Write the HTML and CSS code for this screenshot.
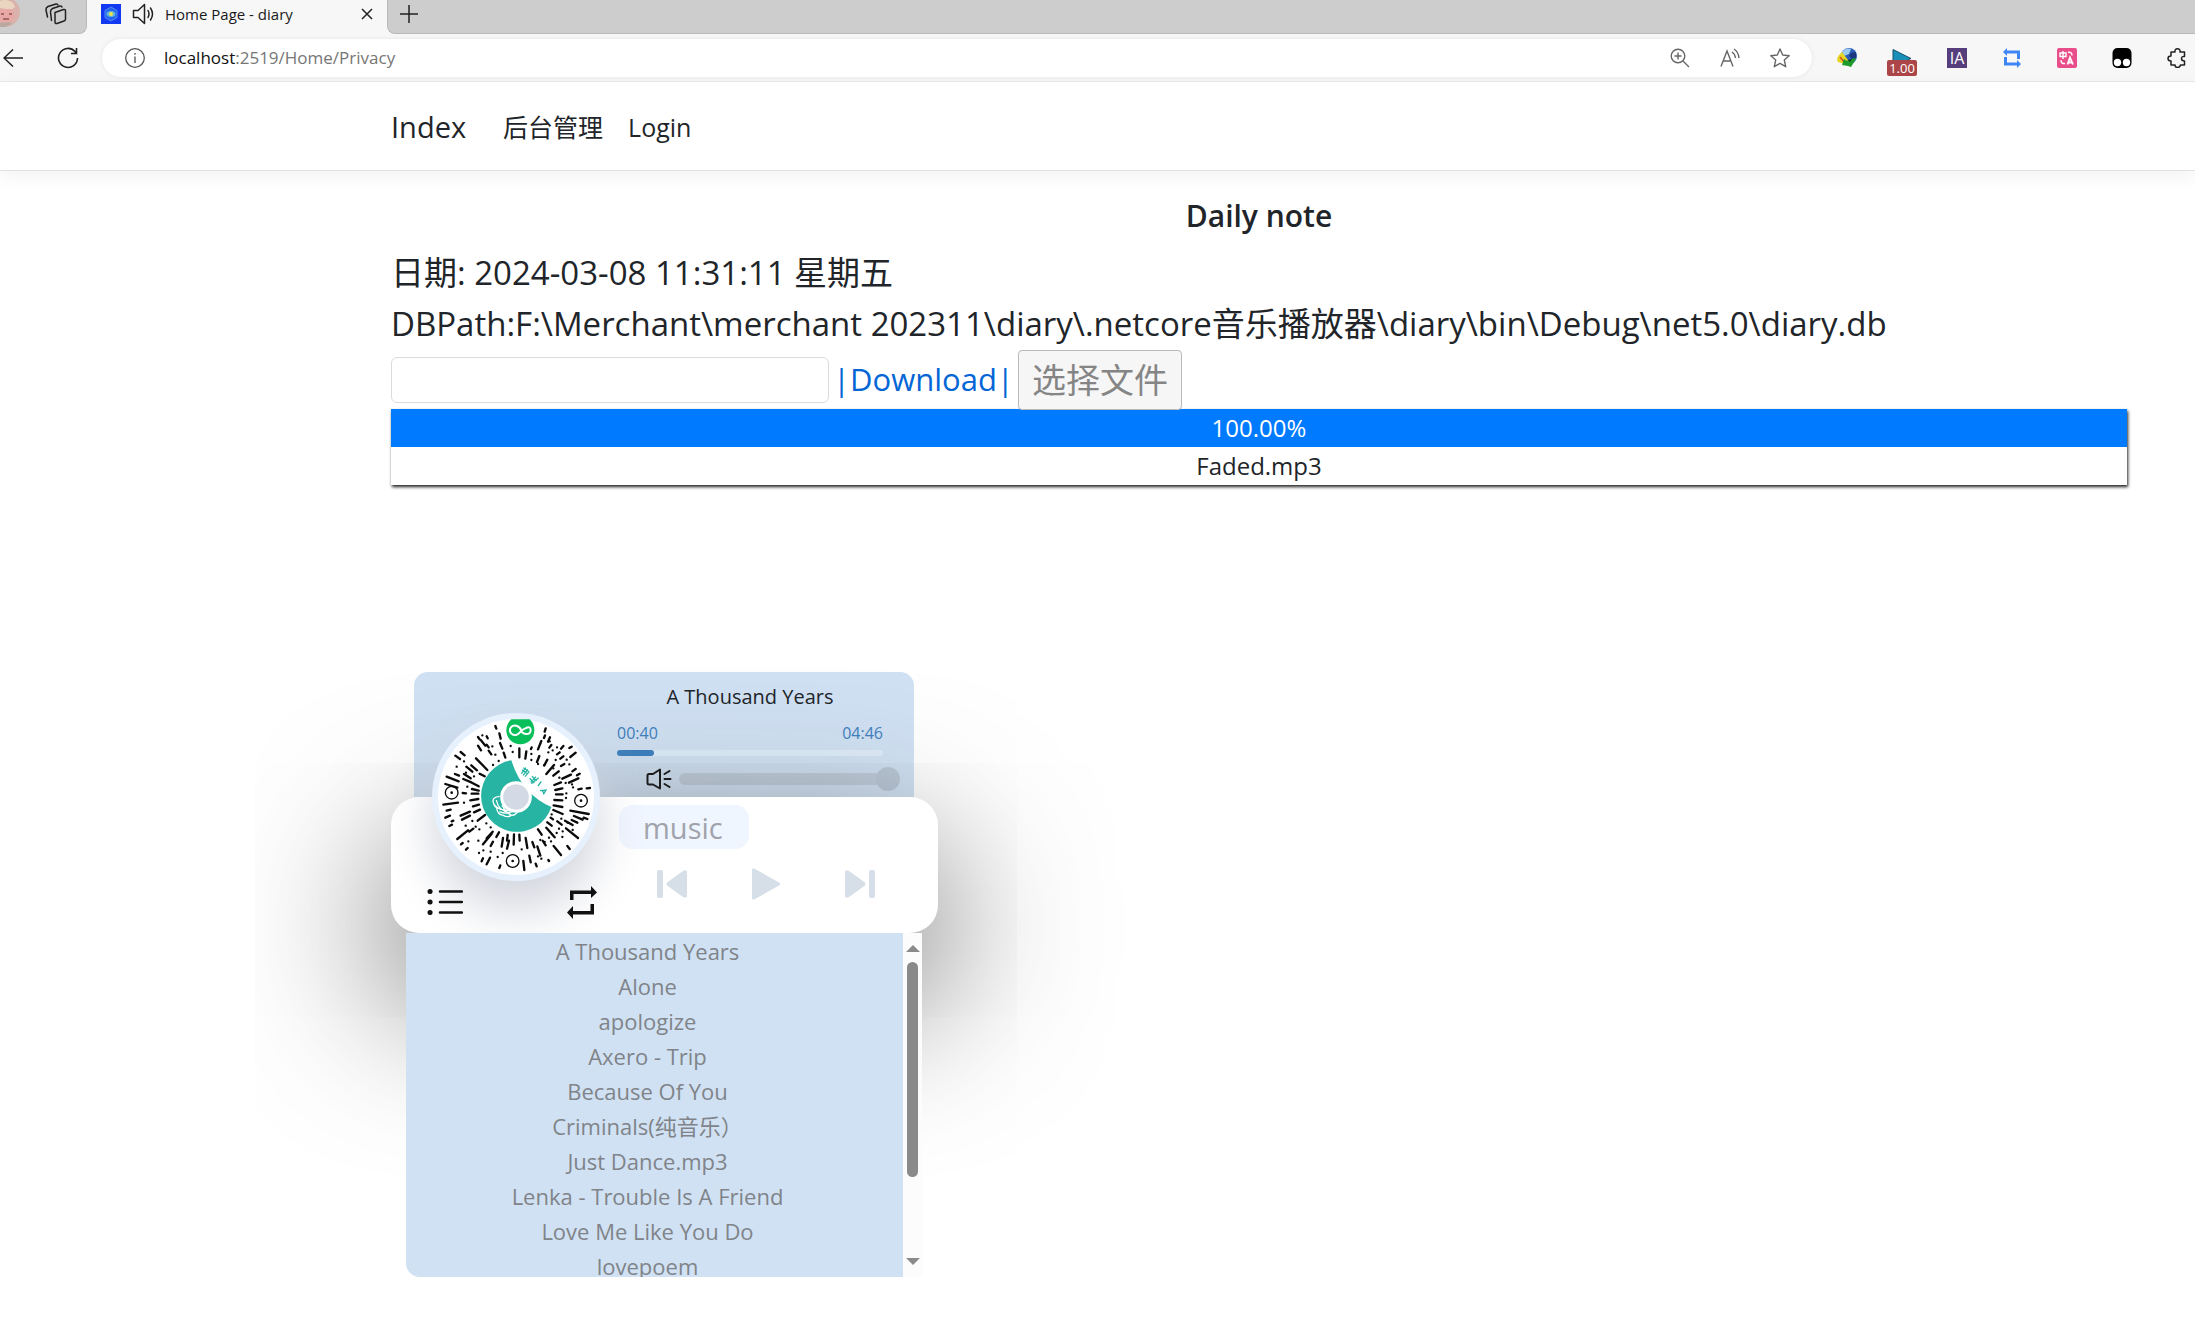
FILE: index.html
```html
<!DOCTYPE html>
<html lang="zh-CN">
<head>
<meta charset="utf-8">
<title>Home Page - diary</title>
<link rel="stylesheet" href="styles.css">
</head>
<body>
<div class="tabstrip">
  <div class="strip-left">
    <svg class="avatar" width="22" height="32" viewBox="0 0 22 32" aria-hidden="true">
      <circle cx="5" cy="14" r="15" fill="#d9b3ab"/><path d="M0 3c7-3 14 1 15 6l-4 3-11-2z" fill="#e9d5c0"/><path d="M0 11h12l3 8-5 5H0z" fill="#e8a8a6"/><path d="M1 16h3M9 16h3M3 21h6" stroke="#a86a68" stroke-width="2"/><path d="M0 25l10-1 2 2-7 3H0z" fill="#b9a8a2"/>
    </svg>
    <button class="chrome-btn" aria-label="Workspaces">
      <svg width="22" height="22" viewBox="0 0 22 22" fill="none" stroke="#222" stroke-width="1.5" stroke-linejoin="round" stroke-linecap="round"><path d="M10 9.500 18.500 6.500Q20.500 6 20.500 8V16Q20.500 17.500 19 18L12 20.500Q10 21 10 19z"/><path d="M6.500 17.500 5.500 9Q5.500 6.500 7.500 5.500L15 3Q16.500 2.600 17 4"/><path d="M2.500 14 1 7Q.8 4.500 3 3.500L11 1Q12.500.6 13 2"/></svg>
    </button>
  </div>
  <div class="tab">
    <svg width="20" height="20" viewBox="0 0 20 20" aria-hidden="true"><path fill="#1238f2" d="M0 0h20v20H0z"/><path d="M10 3l6 3.500v7L10 17l-6-3.500v-7z" fill="#2563f0" stroke="#4d8df5"/><ellipse cx="10" cy="10" rx="4.500" ry="3" fill="#5cb8d8"/><circle cx="10" cy="10" r="2" fill="#f3e04d"/></svg>
    <svg class="tab-sound" width="22" height="22" viewBox="0 0 22 22" fill="none" stroke="#222" stroke-width="1.500" stroke-linejoin="round" stroke-linecap="round" aria-hidden="true"><path d="M1.500 7.500H6L12.500 1.500V20.500L6 14.500H1.500z"/><path d="M16 7.500q2 3.500 0 7M18.500 5q4 6 0 12"/></svg>
    <span class="tab-title">Home Page - diary</span>
    <button class="chrome-btn" aria-label="Close tab"><svg width="12" height="12" viewBox="0 0 12 12" stroke="#222" stroke-width="1.500"><path d="M1 1l10 10M11 1L1 11"/></svg></button>
  </div>
  <div class="strip-right">
    <button class="chrome-btn" aria-label="New tab"><svg width="18" height="18" viewBox="0 0 18 18" stroke="#222" stroke-width="1.500"><path d="M9 0v18M0 9h18"/></svg></button>
  </div>
</div>
<div class="toolbar">
  <div class="nav-buttons">
    <button class="chrome-btn" aria-label="Back"><svg width="20" height="18" viewBox="0 0 20 18" fill="none" stroke="#222" stroke-width="1.500"><path d="M20 9H1M10 .5L1 9l9 8.500"/></svg></button>
    <button class="chrome-btn" aria-label="Refresh"><svg width="22" height="22" viewBox="0 0 22 22" fill="none" stroke="#222" stroke-width="1.600"><path d="M20.500 11A9.500 9.500 0 1 1 18 4.500L19.500 6.500M19.500 1V6.500H14"/></svg></button>
  </div>
  <div class="address">
    <svg width="20" height="20" viewBox="0 0 20 20" fill="none" stroke="#555" stroke-width="1.300" aria-hidden="true"><circle cx="10" cy="10" r="9.300"/><path d="M10 8.500V15M10 5v1.800"/></svg>
    <span class="url"><b>localhost</b>:2519/Home/Privacy</span>
    <div class="address-tools">
      <button class="chrome-btn" aria-label="Zoom"><svg width="20" height="20" viewBox="0 0 20 20" fill="none" stroke="#666" stroke-width="1.400"><circle cx="8" cy="8" r="6.800"/><path d="M13 13l6 6M8 4.500v7M4.500 8h7"/></svg></button>
      <button class="chrome-btn" aria-label="Read aloud"><svg width="20" height="20" viewBox="0 0 20 20" fill="none" stroke="#666" stroke-width="1.400"><path d="M1 18.500L7 3l6 15.500M3.200 13h7.600M12 4q3 2 3.500 6M14 1q4.500 3 5 9"/></svg></button>
      <button class="chrome-btn" aria-label="Favorite"><svg width="20" height="20" viewBox="0 0 20 20" fill="none" stroke="#666" stroke-width="1.400" stroke-linejoin="round"><path d="M10 1l2.700 6 6.500.7-4.900 4.400 1.400 6.600L10 15.400l-5.700 3.300 1.400-6.600L.8 7.700l6.500-.7z"/></svg></button>
    </div>
  </div>
  <div class="extensions">
    <svg width="20" height="20" viewBox="0 0 20 20" aria-hidden="true"><circle cx="12" cy="8" r="8" fill="#2a5cb8"/><path d="M5 4q4-5 9-3l-2 5-5 2z" fill="#9ccbf2"/><path d="M14 5l5-1v6l-4 1-3-3z" fill="#1c377d"/><path d="M5 4q-7 6-4 10l7 2 3-4z" fill="#e6d624"/><path d="M3 9l5 6" stroke="#d64b2b" stroke-width="1.500"/><path d="M7 11l3 2 8-3 1 1-5 8-3-1-6-1z" fill="#1d9c2c"/><path d="M11 12l4-1-2 3z" fill="#113a17"/></svg>
    <span class="speed"><svg width="20" height="20" viewBox="0 0 20 20" aria-hidden="true"><path d="M1 1.500L19 10.500 1 19z" fill="#1a8fb8" stroke="#15506b"/></svg><span class="speed-badge">1.00</span></span>
    <span class="ia">IA</span>
    <svg width="20" height="20" viewBox="0 0 20 20" fill="#3f86f5" aria-hidden="true"><path d="M1 4l4-4v2.500h13V11h-3V5.500H5V8z"/><path d="M19 16l-4 4v-2.500H2V9h3v5.500h10V12z"/></svg>
    <svg width="20" height="20" viewBox="0 0 20 20" fill="none" stroke="#fff" stroke-width="1.400" aria-hidden="true"><rect width="20" height="20" rx="2" fill="#e84f8a" stroke="none"/><path d="M3 5h6v3.500H3zM6 3v8M11 4.500q4-1 4 3M4 12q0 4 4 3.500"/><path d="M10.500 16.500L13 9.500l3 7M11 14.500h4" stroke-width="1.800"/></svg>
    <svg width="20" height="20" viewBox="0 0 20 20" aria-hidden="true"><rect x=".5" width="19" height="20" rx="5"/><circle cx="5.500" cy="14.500" r="3.700" fill="#fff"/><circle cx="14.500" cy="14.500" r="3.700" fill="#fff"/></svg>
    <svg width="20" height="20" viewBox="0 0 20 20" fill="none" stroke="#222" stroke-width="1.500" stroke-linejoin="round" aria-hidden="true"><path d="M4 4H8Q7.500.8 10.500.8T13 4H17.500V8.500Q14.500 8 14.500 10.500T17.500 13V17H13.500Q13 19.500 10.500 19.500T8 17H4V13Q1 13 1 10.500T4 8z"/></svg>
  </div>
</div>

<header class="navbar">
  <nav class="nav">
    <a class="brand" href="#">Index</a>
    <a class="nav-link" href="#">后台管理</a>
    <a class="nav-link" href="#">Login</a>
  </nav>
</header>

<main class="content">
  <h1 class="title">Daily note</h1>
  <p class="line">日期: 2024-03-08 11:31:11 星期五</p>
  <p class="line">DBPath:F:\Merchant\merchant 202311\diary\.netcore音乐播放器\diary\bin\Debug\net5.0\diary.db</p>
  <div class="upload">
    <input class="field" type="text" aria-label="File name">
    <a class="download" href="#">|Download|</a>
    <button class="choose" disabled>选择文件</button>
  </div>
  <div class="progress">
    <div class="progress-bar">100.00%</div>
    <div class="progress-name">Faded.mp3</div>
  </div>

  <section class="player" aria-label="Music player">
    <div class="track">
      <div class="track-name">A Thousand Years</div>
      <div class="times"><span>00:40</span><span>04:46</span></div>
      <div class="seek"><div class="seek-fill" style="width:14%"></div></div>
      <div class="volume">
        <svg width="26" height="22" viewBox="0 0 26 22" fill="none" stroke="#111" stroke-width="2" stroke-linejoin="round" stroke-linecap="round" aria-hidden="true"><path d="M1.500 7.500Q1.500 6 3 6H7L14 1.500V20.500L7 16.500H3Q1.500 16.500 1.500 15z"/><path d="M18.500 11H24.500M18.500 6L23.500 3M18.500 16L23.500 19"/></svg>
        <input class="volume-range" type="range" min="0" max="100" value="100" aria-label="Volume">
      </div>
    </div>
    <div class="panel">
      <div class="modes">
        <button class="icon-btn" aria-label="Playlist"><svg width="36" height="28" viewBox="0 0 36 28" stroke="#111" stroke-width="2.500" stroke-linecap="round"><path d="M13 3.500h22M13 14h22M13 24.500h22"/><path d="M3 3.500h.1M3 14h.1M3 24.500h.1" stroke-width="5"/></svg></button>
        <button class="icon-btn" aria-label="Repeat"><svg width="32" height="34" viewBox="0 0 32 34" fill="#111"><path d="M4 15V5.500H25V1L31 7.500 25 13V9H7.500V15z"/><path d="M28 19V29.500H7V34L1 27.500 7 21V26H24.500V19z"/></svg></button>
      </div>
      <div class="deck">
        <span class="pill">music</span>
        <div class="controls">
          <button class="icon-btn" aria-label="Previous"><svg width="32" height="32" viewBox="0 0 32 32" fill="#d6dee7"><rect x="1" y="2" width="6" height="28" rx="2"/><path d="M11 14.500Q10 16 11 17.500L27 29Q31 31 31 28V4Q31 1 27 3z"/></svg></button>
          <button class="icon-btn" aria-label="Play"><svg width="32" height="34" viewBox="0 0 32 34" fill="#d6dee7"><path d="M2 3Q2 0 5 2L29 15.500Q31 17 29 18.500L5 32Q2 34 2 31z"/></svg></button>
          <button class="icon-btn" aria-label="Next"><svg width="32" height="32" viewBox="0 0 32 32" fill="#d6dee7"><rect x="25" y="2" width="6" height="28" rx="2"/><path d="M21 14.500Q22 16 21 17.500L5 29Q1 31 1 28V4Q1 1 5 3z"/></svg></button>
        </div>
      </div>
      <div class="album">
        <svg width="156" height="156" viewBox="38 44 468 468" fill="none" aria-hidden="true">
          <circle cx="272" cy="278" r="234" fill="#fff"/>
          <path d="M258 168A108 108 0 1 0 378 308Q290 270 258 168z" fill="#28b4a2"/>
          <g stroke="#28b4a2" stroke-width="4"><path d="M288 208l14-18M293 213l14-18M299 217l13-16M290 196l14 11M294 190l15 11M316 234l16-17M313 222l14 14M320 216l14 13M318 238l22-18M338 245l10-14M344 259l18-2-8 13M351 258l4 8"/></g>
          <g stroke="#fff" stroke-width="4"><path d="M223 276q-24 2-19 19 2 10 10 16 2 20 20 22 12 8 24 0 18 0 20-18M207 302q20 22 62 14M213 287q6 34 42 38M222 322q28 12 50-8M230 302q12 24 28 30"/></g>
          <path d="M258 45H313Q327 58 327 78A42 42 0 0 1 243 78Q243 58 258 45z" fill="#09bf5a"/>
          <path d="M300 72q16-8 16 5c0 18-24 14-28 2-5-15-24-21-32-9-7 12 4 24 16 22 12-2 12-14 28-20" stroke="#fff" stroke-width="6" stroke-linecap="round"/>
          <g stroke="#0b0b0b" stroke-width="4"><circle cx="79" cy="265" r="19"/><circle cx="467" cy="289" r="19"/><circle cx="262" cy="470" r="19"/></g>
          <path d="M79 265h.1M467 289h.1M262 470h.1" stroke="#0b0b0b" stroke-width="8" stroke-linecap="round"/>
          <g stroke="#0b0b0b" stroke-width="7" stroke-linecap="round">
            <path d="M210 65l3 8M222 87l4 16M224 116l7 17M235 145l5 15M184 96l3 6M158 98l5 7M167 108l13 16M158 124l9 14M184 121l6 8M190 139l8 11M152 162l34 35M106 143l12 10M90 154l14 10M123 187l18 15M138 183l17 15M163 208l15 8M89 209l12 5M64 217l36 14M116 209l20 13M114 224l24 10M134 232l26 14M60 239l36 11M140 254l20 5M112 266l10 1M139 268l20 0M54 301l44-6M135 288l24-4M143 306l18-5M106 334l28-12M64 319l12-3M146 324l18-8M60 340l14-6M110 346l24-12M79 351l5-2M72 365l8-4M157 349l22-17M96 404l32-26M132 382l12-9M107 420l5-4M122 436l5-5M173 420l26-32M184 402l18-20M196 425l7-13M213 398l8-14M169 471l4-9M184 480l10-20M222 491l3-8M229 427l4-26M245 433l6-24M245 409l2-17M265 421l1-31M283 409l-1-18M306 431l-5-30M297 497l-3-27M316 474l-4-20M334 486l-3-8M327 429l-6-16M345 454l-9-28M371 470l-2-3M361 423l-9-14M349 391l-11-16M407 452l-22-27M388 399l-25-29M379 364l-13-10M433 434l-7-9M458 401l-36-29M442 362l-23-13M409 361l-13-10M383 345l-7-5M456 355l-17-8M472 346l-26-11M486 344l-11-4M412 329l-28-12M435 319l55 10M411 308l-26-5M411 288l-24-1M412 270l-20 0M411 252l-21 5M494 251l-10 1M469 253l-10 2M407 234l-20 8M459 222l-28 13M463 208l-8 5M437 211l-26 12M386 182l-23 27M400 201l-16 13M366 166l-9 17M342 155l-7 18M441 201l10-7M435 158l16-13M414 156l-9 7M407 133l7-8M432 131l7-4M395 150l8-6M407 185l10-6M361 72l-3 10M359 93l-3 8M348 110l-10 25M374 99l-6 13M378 122l-6 8M282 132v27M303 141l-3 22M319 129l-2 5"/>
          </g>
          <g stroke="#0b0b0b" stroke-width="7" stroke-linecap="round">
            <path d="M201 126h.1M171 93h.1M210 151h.1M220 170h.1M203 182h.1M256 125h.1M262 143h.1M318 149h.1M318 167h.1M338 179h.1M369 144h.1M382 138h.1M391 167h.1M395 129h.1M356 183h.1M384 192h.1M373 111h.1M116 171h.1M122 205h.1M146 216h.1M94 187h.1M126 247h.1M116 295h.1M141 350h.1M121 364h.1M151 367h.1M183 357h.1M196 369h.1M162 375h.1M159 409h.1M129 411h.1M161 446h.1M174 438h.1M196 442h.1M217 458h.1M232 446h.1M289 435h.1M338 456h.1M348 463h.1M371 400h.1M377 411h.1M358 413h.1M345 407h.1M401 373h.1M394 386h.1M411 398h.1M412 381h.1M427 355h.1M408 343h.1M379 330h.1M442 377h.1M422 281h.1M423 267h.1M421 236h.1M440 240h.1M443 249h.1M402 220h.1M424 166h.1M432 180h.1"/>
          </g>
          <circle cx="272" cy="278" r="43" fill="#d3dae5" stroke="#fff" stroke-width="9"/>
        </svg>
      </div>
    </div>
    <div class="playlist">
      <ul class="songs">
        <li>A Thousand Years</li>
        <li>Alone</li>
        <li>apologize</li>
        <li>Axero - Trip</li>
        <li>Because Of You</li>
        <li>Criminals(纯音乐）</li>
        <li>Just Dance.mp3</li>
        <li>Lenka - Trouble Is A Friend</li>
        <li>Love Me Like You Do</li>
        <li>lovepoem</li>
      </ul>
      <div class="scrollbar" aria-hidden="true">
        <span class="arrow-up"></span>
        <span class="thumb-track"><span class="thumb"></span></span>
        <span class="arrow-down"></span>
      </div>
    </div>
  </section>
</main>
</body>
</html>
```
FILE: styles.css
```css
* { box-sizing: border-box; }

body {
  margin: 0;
  background: #fff;
  color: #212529;
  font-family: "Open Sans", "Noto Sans CJK SC", sans-serif;
  overflow: hidden;
}

svg { display: block; flex: none; }
button { font-family: inherit; }

.chrome-btn, .icon-btn {
  padding: 0;
  border: 0;
  background: none;
  display: block;
}

/* Browser chrome */
.tabstrip {
  display: flex;
  height: 34px;
  background: #f7f7f7;
}
.strip-left {
  width: 87px;
  display: flex;
  gap: 23px;
  padding-bottom: 6px;
  align-items: center;
  background: #cdcdcd;
  border-bottom: 1px solid #b9b9b9;
  border-right: 1px solid #b9b9b9;
  border-radius: 0 0 8px 0;
}
.tab {
  width: 300px;
  display: flex;
  align-items: center;
  padding: 0 14px 6px;
}
.tab-sound { margin: 0 11px; }
.tab-title {
  flex: 1;
  font-size: 15px;
  line-height: 20px;
  color: #1a1a1a;
}
.strip-right {
  flex: 1;
  display: flex;
  align-items: center;
  padding: 0 12px 6px;
  background: #cdcdcd;
  border-bottom: 1px solid #b9b9b9;
  border-left: 1px solid #b9b9b9;
  border-radius: 0 0 0 8px;
}
.toolbar {
  display: flex;
  align-items: center;
  height: 48px;
  background: #f7f7f7;
  border-bottom: 1px solid #e8e8e8;
}
.nav-buttons {
  width: 102px;
  display: flex;
  align-items: center;
  gap: 34px;
  padding-left: 3px;
}
.address {
  flex: 1;
  height: 38px;
  display: flex;
  align-items: center;
  gap: 19px;
  padding: 0 22px 0 23px;
  border-radius: 19px;
  background: #fff;
  box-shadow: 0 0 4px #e4e4e4;
}
.url {
  flex: 1;
  font-size: 17px;
  line-height: 24px;
  color: #767676;
}
.url b { font-weight: 400; color: #111; }
.address-tools { display: flex; gap: 30px; }
.extensions {
  display: flex;
  align-items: center;
  gap: 35px;
  padding: 0 8px 0 25px;
}
.speed { position: relative; }
.speed-badge {
  position: absolute;
  left: -5px;
  top: 12px;
  width: 30px;
  border-radius: 2px;
  background: #ab4548;
  color: #fff;
  font-size: 13px;
  line-height: 16px;
  text-align: center;
}
.ia {
  width: 20px;
  background: #563d7c;
  color: #fff;
  font-size: 16px;
  line-height: 20px;
  text-align: center;
}

/* Site header */
.navbar {
  height: 89px;
  display: flex;
  align-items: center;
  padding: 2px 0 0 391px;
  border-bottom: 1px solid #dee2e6;
  box-shadow: 0 6px 18px rgba(0, 0, 0, .05);
}
.nav { display: flex; align-items: center; }
.nav a { color: #212529; text-decoration: none; }
.brand {
  font-size: 29px;
  line-height: 40px;
  margin-right: 37px;
}
.nav-link {
  font-size: 25px;
  line-height: 40px;
  margin-right: 25px;
}

/* Page body */
.content { padding: 20px 68px 0 391px; }
.title {
  margin: 0 0 6px;
  font-size: 30px;
  line-height: 50px;
  font-weight: 600;
  text-align: center;
}
.line {
  margin: 0;
  font-size: 33px;
  line-height: 51px;
  white-space: nowrap;
}
.upload {
  display: flex;
  align-items: center;
  gap: 4px;
  height: 60px;
  padding-top: 1px;
}
.field {
  width: 438px;
  height: 46px;
  border: 1px solid #d9dcdf;
  border-radius: 6px;
  background: #fff;
}
.download {
  color: #0366d6;
  font-size: 31px;
  line-height: 51px;
  text-decoration: none;
}
.choose {
  width: 164px;
  height: 60px;
  padding: 0;
  border: 1px solid #b9b9b9;
  border-radius: 4px;
  background: #f6f6f6;
  color: #858585;
  font-size: 34px;
  line-height: 50px;
}
.progress {
  box-shadow: 1px 2px 3px #222;
  background: #fff;
  text-align: center;
  font-size: 24px;
  line-height: 38px;
}
.progress-bar { background: #007bff; color: #fff; }

/* Music player */
.player {
  width: 547px;
  margin-top: 187px;
}
.track {
  height: 125px;
  margin: 0 24px 0 23px;
  padding: 8px 14px 0 203px;
  border-radius: 14px 14px 0 0;
  background: #d0e1f3;
}
.track-name {
  font-size: 20px;
  line-height: 34px;
  padding-right: 17px;
  text-align: center;
}
.times {
  display: flex;
  justify-content: space-between;
  padding: 8px 17px 0 0;
  color: #3f80bf;
  font-size: 16px;
  line-height: 22px;
}
.seek {
  height: 6px;
  margin: 6px 17px 0 0;
  border-radius: 3px;
  background: #deebf9;
}
.seek-fill {
  height: 6px;
  border-radius: 3px;
  background: #3c7fbf;
}
.volume {
  display: flex;
  align-items: center;
  gap: 7px;
  padding: 11px 0 0 29px;
}
.volume-range {
  -webkit-appearance: none;
  appearance: none;
  flex: 1;
  min-width: 0;
  height: 24px;
  margin: 0;
  background: none;
}
.volume-range::-webkit-slider-runnable-track {
  height: 12px;
  border-radius: 6px;
  background: #bfccdb;
}
.volume-range::-webkit-slider-thumb {
  -webkit-appearance: none;
  width: 24px;
  height: 24px;
  margin-top: -6px;
  border-radius: 50%;
  background: #b9c7d6;
}
.panel {
  position: relative;
  display: flex;
  height: 136px;
  border-radius: 28px;
  background: #fff;
  box-shadow: 0 60px 160px #555;
}
.modes {
  width: 228px;
  display: flex;
  align-items: center;
  justify-content: space-between;
  padding: 74px 21px 0 36px;
}
.modes .icon-btn { position: relative; z-index: 1; }
.deck { padding-top: 8px; }
.pill {
  display: block;
  width: 130px;
  height: 44px;
  padding-left: 24px;
  border-radius: 14px;
  background: #f0f6ff;
  color: #a0a3ab;
  font-size: 29px;
  line-height: 46px;
}
.controls {
  display: flex;
  align-items: center;
  gap: 62px;
  padding: 18px 0 0 37px;
}
.album {
  position: absolute;
  left: 41px;
  top: -84px;
  padding: 6px;
  border-radius: 50%;
  background: #e6f1fd;
  box-shadow: 0 30px 50px #d3d6de;
}
.playlist {
  position: relative;
  display: flex;
  height: 344px;
  margin: 0 16px 0 15px;
}
.songs {
  flex: 1;
  margin: 0;
  padding: 1px 14px 0 0;
  overflow: hidden;
  list-style: none;
  border-radius: 0 0 0 14px;
  background: #d0e1f3;
  color: #808489;
  font-size: 22px;
  line-height: 35px;
  text-align: center;
}
.songs li { height: 35px; }
.scrollbar {
  width: 19px;
  display: flex;
  flex-direction: column;
  align-items: center;
  padding: 12px 0;
  background: #fcfcfc;
}
.arrow-up, .arrow-down {
  border-left: 7px solid transparent;
  border-right: 7px solid transparent;
}
.arrow-up { border-bottom: 7px solid #8a8a8a; }
.arrow-down { border-top: 7px solid #8a8a8a; }
.thumb-track { flex: 1; padding-top: 10px; }
.thumb {
  display: block;
  width: 11px;
  height: 215px;
  border-radius: 6px;
  background: #8a8a8a;
}
```
